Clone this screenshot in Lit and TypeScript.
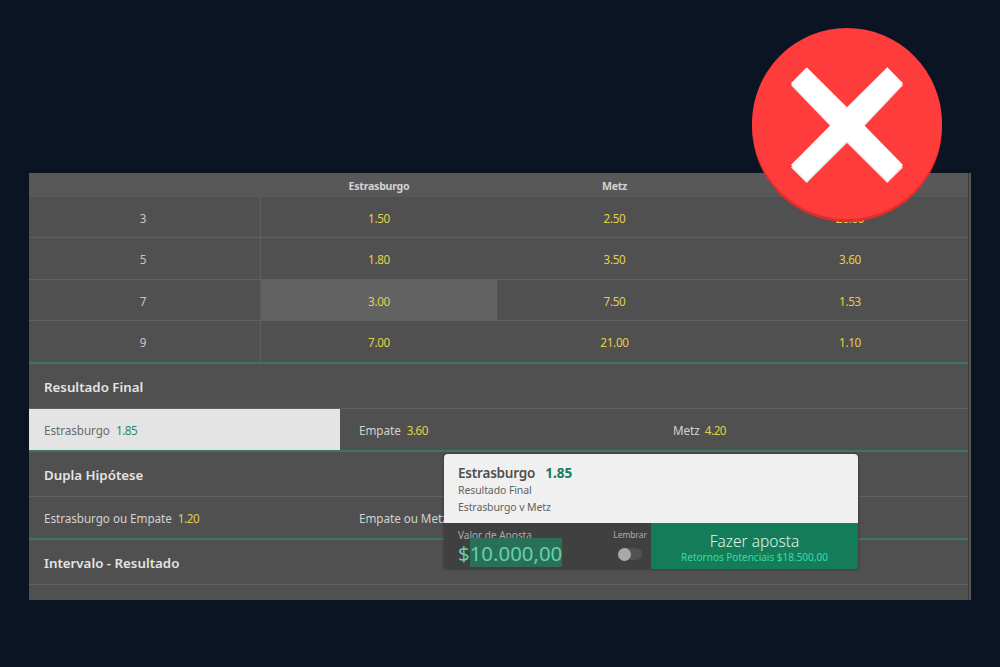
import { LitElement, html, css, svg } from 'lit';
import { customElement, property } from 'lit/decorators.js';
import { classMap } from 'lit/directives/class-map.js';

interface Odd {
  name: string;
  value: string;
  selected?: boolean;
}

interface Market {
  title: string;
  odds: Odd[];
}

const HEADERS = ['', 'Estrasburgo', 'Metz', ''];

const ROWS = [
  ['3', '1.50', '2.50', '26.00'],
  ['5', '1.80', '3.50', '3.60'],
  ['7', '3.00', '7.50', '1.53'],
  ['9', '7.00', '21.00', '1.10'],
];

const MARKETS: Market[] = [
  {
    title: 'Resultado Final',
    odds: [
      { name: 'Estrasburgo', value: '1.85', selected: true },
      { name: 'Empate', value: '3.60' },
      { name: 'Metz', value: '4.20' },
    ],
  },
  {
    title: 'Dupla Hipótese',
    odds: [
      { name: 'Estrasburgo ou Empate', value: '1.20' },
      { name: 'Empate ou Metz', value: '' },
    ],
  },
  { title: 'Intervalo - Resultado', odds: [] },
];

@customElement('odds-table')
export class OddsTable extends LitElement {
  static styles = css`
    :host {
      display: block;
    }
    .row {
      display: grid;
      grid-template-columns: 232px 236px 235px 236px;
      height: 41px;
      box-sizing: border-box;
      border-bottom: 1px solid #606060;
      color: #e3d04a;
      letter-spacing: -0.3px;
    }
    .row.tall {
      height: 42px;
    }
    .row.last {
      border-bottom: none;
    }
    .row.head {
      height: 24px;
      border-bottom: none;
      background: #585858;
      color: #d2d2d2;
      font-size: 10.6px;
      font-weight: 700;
      letter-spacing: -0.25px;
    }
    .cell {
      display: flex;
      align-items: center;
      justify-content: center;
      padding-top: 1px;
    }
    .label {
      box-sizing: border-box;
      border-right: 1px solid #5e5e5e;
      padding-right: 3px;
      color: #c8c8c8;
    }
    .head .label {
      border-right: none;
    }
    .active {
      background: #626262;
    }
  `;

  render() {
    return html`
      <div class="row head">
        ${HEADERS.map((h) => html`<div class="cell">${h}</div>`)}
      </div>
      ${ROWS.map((row, i) => html`
        <div class=${classMap({ row: true, tall: i === 1, last: i === ROWS.length - 1 })}>
          ${row.map((value, j) => html`
            <div class=${classMap({ cell: true, label: j === 0, active: i === 2 && j === 1 })}>${value}</div>
          `)}
        </div>
      `)}
    `;
  }
}

@customElement('market-group')
export class MarketGroup extends LitElement {
  static styles = css`
    :host {
      display: block;
      border-top: 2px solid #3a7762;
    }
    .title {
      display: flex;
      align-items: center;
      box-sizing: border-box;
      height: 45px;
      padding: 1px 15px 0;
      border-bottom: 1px solid #606060;
      color: #e4e4e4;
      font-size: 13.3px;
      font-weight: 600;
    }
    .odds {
      display: grid;
      grid-template-columns: 311px 318px 310px;
      height: 41px;
    }
    .odd {
      display: flex;
      align-items: center;
      gap: 6px;
      padding: 0 0 0 19px;
      color: #d2d2d2;
      letter-spacing: -0.05px;
      white-space: nowrap;
    }
    .odd:first-child {
      padding-left: 15px;
    }
    .odd:nth-child(3) {
      padding-left: 15px;
      gap: 5px;
    }
    .value {
      color: #e3d04a;
      letter-spacing: -0.45px;
    }
    .selected {
      background: #e4e4e4;
      color: #6a6a6a;
    }
    .selected .value {
      color: #2a8a68;
    }
  `;

  @property({ attribute: false }) market!: Market;

  render() {
    const { title, odds } = this.market;
    return html`
      <div class="title">${title}</div>
      <div class="odds">
        ${odds.map((o) => html`
          <div class=${classMap({ odd: true, selected: !!o.selected })}>
            <span>${o.name}</span><span class="value">${o.value}</span>
          </div>
        `)}
      </div>
    `;
  }
}

@customElement('bet-slip')
export class BetSlip extends LitElement {
  static styles = css`
    :host {
      display: block;
      width: 414px;
      height: 115px;
      border-radius: 4px;
      overflow: hidden;
      box-shadow: 0 0 3px rgba(0, 0, 0, 0.45);
      white-space: nowrap;
    }
    .info {
      box-sizing: border-box;
      height: 69px;
      padding: 9px 14px 0;
      background: #f0f0f0;
      color: #626262;
      font-size: 10.5px;
      letter-spacing: -0.1px;
      line-height: 16.5px;
    }
    .pick {
      display: flex;
      gap: 10px;
      height: 19px;
      line-height: 20px;
      font-size: 13.5px;
      font-weight: 600;
      letter-spacing: -0.2px;
      color: #505050;
    }
    .price {
      color: #167c59;
      font-weight: 700;
      letter-spacing: 0;
    }
    .actions {
      display: flex;
      height: 46px;
    }
    .stake {
      display: flex;
      flex: 1;
      justify-content: space-between;
      padding: 5px 4px 0 14px;
      background: #404040;
      color: #acacac;
    }
    .stake-label {
      height: 9px;
      line-height: 15px;
      font-size: 10px;
    }
    .amount {
      display: flex;
      color: #62d3a9;
      font-size: 20.4px;
      line-height: 32px;
    }
    .marked {
      height: 29px;
      margin-top: 1px;
      background: #2a6f59;
      line-height: 30px;
    }
    .remember {
      display: flex;
      flex-direction: column;
      align-items: center;
      font-size: 8.6px;
      letter-spacing: -0.1px;
      line-height: 15px;
    }
    .toggle {
      width: 24px;
      height: 12px;
      margin: 5px 0 0;
      border-radius: 6px;
      background: #525252;
    }
    .knob {
      width: 13px;
      height: 13px;
      border-radius: 50%;
      background: #a9a9a9;
    }
    .place {
      display: flex;
      flex-direction: column;
      align-items: center;
      width: 207px;
      box-sizing: border-box;
      padding-top: 8px;
      background: #157c5a;
      color: #dcf6ec;
      font-size: 15.5px;
      line-height: 20px;
    }
    .cta {
      font-weight: 300;
    }
    .returns {
      color: #35dca3;
      font-size: 10px;
      line-height: 12px;
    }
  `;

  render() {
    return html`
      <div class="info">
        <div class="pick"><span class="name">Estrasburgo</span><span class="price">1.85</span></div>
        <div class="market">Resultado Final</div>
        <div class="fixture">Estrasburgo v Metz</div>
      </div>
      <div class="actions">
        <div class="stake">
          <div>
            <div class="stake-label">Valor de Aposta</div>
            <div class="amount"><span>$</span><span class="marked">10.000,00</span></div>
          </div>
          <div class="remember">
            <span>Lembrar</span>
            <div class="toggle"><div class="knob"></div></div>
          </div>
        </div>
        <div class="place">
          <span class="cta">Fazer aposta</span>
          <span class="returns">Retornos Potenciais $18.500,00</span>
        </div>
      </div>
    `;
  }
}

const cross = svg`
  <circle cx="95" cy="99" r="95" fill="#e22d2d"/>
  <ellipse cx="95" cy="95.5" rx="95" ry="95.5" fill="#ff3c3c"/>
  <path fill="#ece6e6" d="M54.7 41.3 39 57.3 78.7 98.5 39 139.5 54.7 155 95 115 135.3 155 151 139.5 112 98.5 151 57.3 135.3 41.3 95 81Z"/>
  <path fill="#fff" d="M54.7 39.3 39 55.3 78.7 97 39 137 54.7 153 95 113 135.3 153 151 137 112 97 151 55.3 135.3 39.3 95 79.3Z"/>
`;

@customElement('app-root')
export class AppRoot extends LitElement {
  static styles = css`
    :host {
      display: block;
      position: relative;
      box-sizing: border-box;
      width: 1000px;
      height: 667px;
      padding: 173px 29px 0;
      overflow: hidden;
      background: #0b1422;
      font-family: 'Noto Sans', 'Open Sans', sans-serif;
      font-size: 11.7px;
    }
    .panel {
      display: flex;
      height: 427px;
      overflow: hidden;
      background: #505050;
    }
    .content {
      width: 939px;
    }
    .scrollbar {
      flex: 1;
      border-left: 1px solid #3c3c3c;
      background: #565656;
    }
    .slip {
      position: absolute;
      left: 444px;
      top: 454px;
    }
    .wrong {
      position: absolute;
      left: 752px;
      top: 28px;
    }
  `;

  render() {
    return html`
      <div class="panel">
        <div class="content">
          <odds-table></odds-table>
          ${MARKETS.map((m) => html`<market-group .market=${m}></market-group>`)}
        </div>
        <div class="scrollbar"></div>
      </div>
      <bet-slip class="slip"></bet-slip>
      <svg class="wrong" width="190" height="194" viewBox="0 0 190 194">${cross}</svg>
    `;
  }
}
